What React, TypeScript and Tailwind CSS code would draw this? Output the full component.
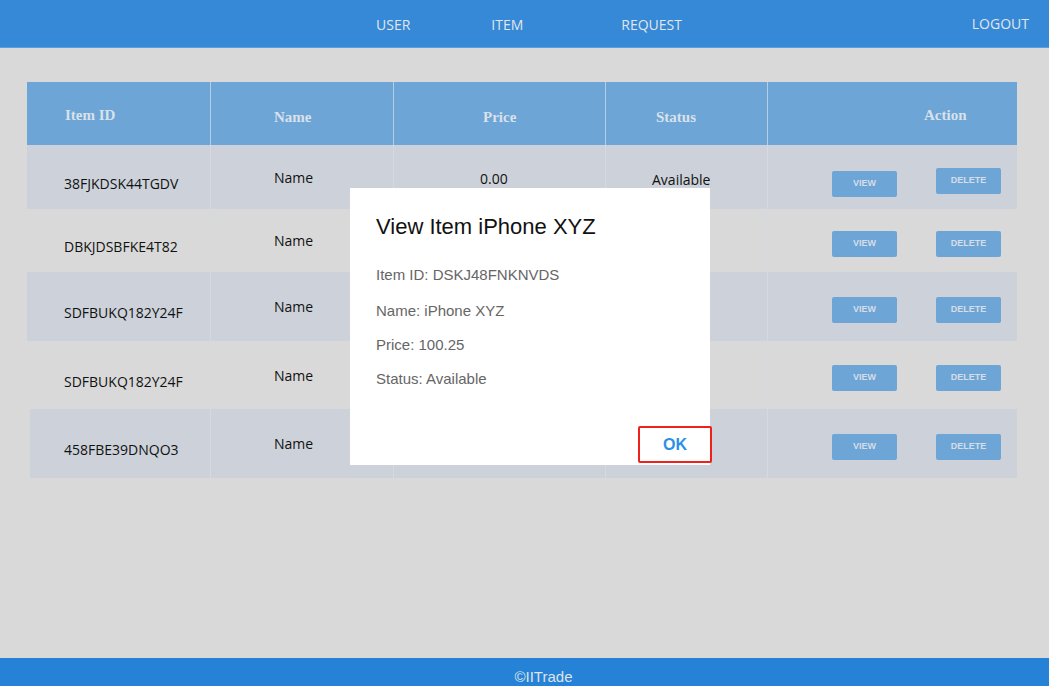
import { useState } from 'react';

type Item = { id: string; name: string; price?: string; status?: string };

const items: Item[] = [
  { id: '38FJKDSK44TGDV', name: 'Name', price: '0.00', status: 'Available' },
  { id: 'DBKJDSBFKE4T82', name: 'Name' },
  { id: 'SDFBUKQ182Y24F', name: 'Name' },
  { id: 'SDFBUKQ182Y24F', name: 'Name' },
  { id: '458FBE39DNQO3', name: 'Name' },
];

const rowHeights = ['h-[64px]', 'h-[63px]', 'h-[69px]', 'h-[68px]', 'h-[69px]'];

export default function App() {
  const [open, setOpen] = useState(true);

  return (
    <div className="relative flex h-[686px] flex-col bg-[#d9d9d9] font-['Open_Sans',sans-serif]">
      {/* nav */}
      <header className="flex h-[48px] shrink-0 items-center border-b border-[#5c9fdc] bg-[#3589d6] text-[14px] text-[#e2e6ec]">
        <a className="ml-[376px] pt-[2px]">USER</a>
        <a className="ml-[81px] pt-[2px]">ITEM</a>
        <a className="ml-[98px] pt-[2px]">REQUEST</a>
        <a className="ml-auto mr-[20px]">LOGOUT</a>
      </header>

      <main className="flex-1 pt-[34px]">
        <div className="ml-[27px] w-[990px]">
          <div className="grid h-[63px] grid-cols-[184px_183px_212px_162px_249px] bg-[#6da5d6] font-['Liberation_Serif',serif] text-[15px] font-bold text-[#d9e1ea]">
            <div className="flex items-center border-r border-[#b7cde2] pl-[38px] pt-[3px]">Item ID</div>
            <div className="flex items-center border-r border-[#b7cde2] pl-[63px] pt-[7px]">Name</div>
            <div className="flex items-center border-r border-[#b7cde2] pl-[89px] pt-[7px]">Price</div>
            <div className="flex items-center border-r border-[#b7cde2] pl-[50px] pt-[7px]">Status</div>
            <div className="flex items-center pl-[156px] pt-[3px]">Action</div>
          </div>

          {items.map((it, i) => {
            const last = i === 4;
            return (
              <div
                key={i}
                className={`grid text-[14px] text-[#111] ${rowHeights[i]} ${i % 2 === 0 ? 'bg-[#cdd2da]' : ''} ${
                  last ? 'ml-[3px] grid-cols-[181px_183px_212px_162px_249px]' : 'grid-cols-[184px_183px_212px_162px_249px]'
                }`}
              >
                <div className={`flex items-center border-r border-[#d6dae0] pt-[12px] ${last ? 'pl-[34px]' : 'pl-[37px]'}`}>
                  {it.id}
                </div>
                <div className="flex items-center border-r border-[#d6dae0] pl-[63px]">{it.name}</div>
                <div className="flex items-center border-r border-[#d6dae0] pl-[86px] pt-[2px]">{it.price}</div>
                <div className="flex items-center border-r border-[#d6dae0] pl-[46px] pt-[4px]">{it.status}</div>
                <div
                  className={`flex items-center gap-[39px] pl-[64px] font-['Liberation_Sans',sans-serif] text-[9px] font-bold text-[#d5dde6] ${
                    i === 0 ? 'pt-[14px]' : 'pt-[6px]'
                  }`}
                >
                  <button className="h-[26px] w-[65px] rounded-[2px] bg-[#6da5d6]">VIEW</button>
                  <button className={`h-[26px] w-[65px] rounded-[2px] bg-[#6da5d6] ${i === 0 ? '-mt-[6px]' : ''}`}>
                    DELETE
                  </button>
                </div>
              </div>
            );
          })}
        </div>
      </main>

      <footer className="flex h-[28px] shrink-0 items-center justify-center bg-[#2582d6] pl-[38px] pt-[10px] font-['Liberation_Sans',sans-serif] text-[15px] text-[#dfe4ea]">
        ©IITrade
      </footer>

      {open && (
        <div className="absolute left-[350px] top-[188px] flex h-[277px] w-[360px] flex-col bg-white font-['Liberation_Sans',sans-serif]">
          <h2 className="ml-[26px] mt-[22px] text-[22px] text-[#111]">View Item iPhone XYZ</h2>
          <div className="ml-[26px] mt-[22px] flex flex-col gap-[14px] text-[15px] leading-[20px] text-[#666]">
            <p>Item ID: DSKJ48FNKNVDS</p>
            <p className="mt-[2px]">Name: iPhone XYZ</p>
            <p>Price: 100.25</p>
            <p>Status: Available</p>
          </div>
          <div className="mt-auto flex justify-end">
            <button
              onClick={() => setOpen(false)}
              className="-mr-[2px] mb-[2px] h-[37px] w-[74px] rounded-[2px] border-2 border-[#f0211a] text-[16px] font-bold text-[#2d8fe8]"
            >
              OK
            </button>
          </div>
        </div>
      )}
    </div>
  );
}
